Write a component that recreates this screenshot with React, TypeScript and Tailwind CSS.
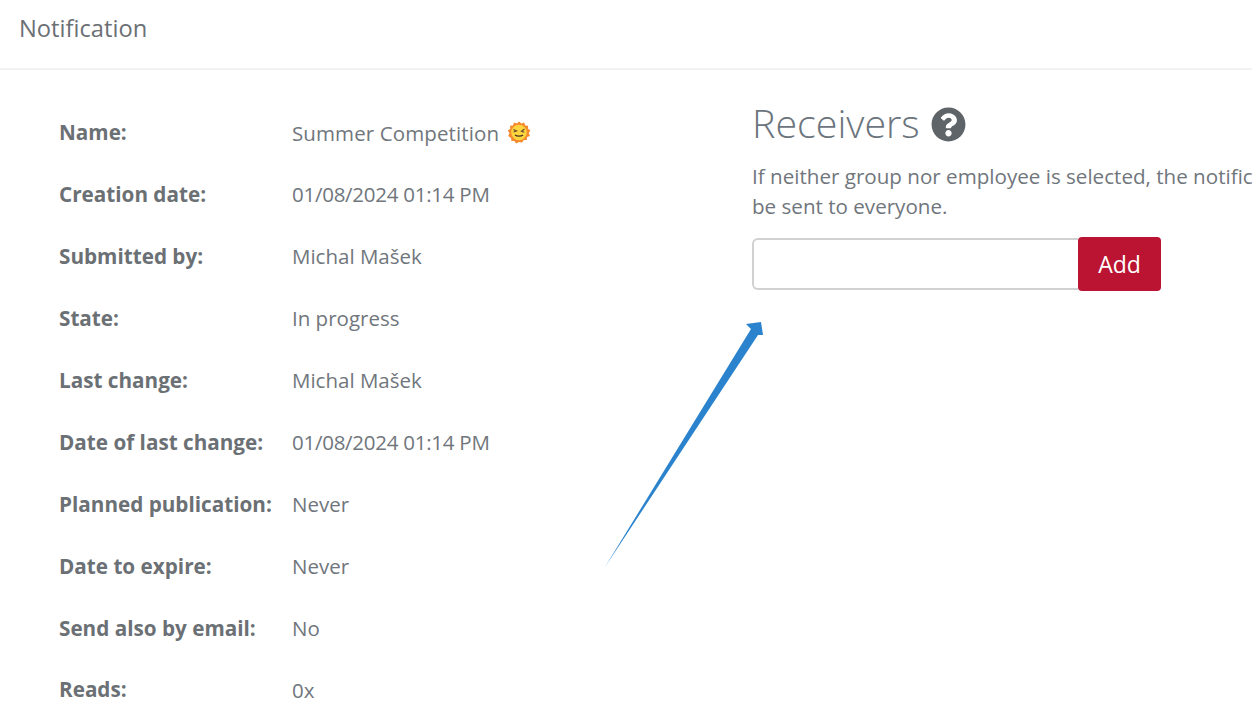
import { FaQuestionCircle } from "react-icons/fa";

const rows = [
  { label: "Name:", value: "Summer Competition", emoji: true, spacing: "tracking-[0.11px]" },
  { label: "Creation date:", value: "01/08/2024 01:14 PM", spacing: "tracking-[-0.26px]" },
  { label: "Submitted by:", value: "Michal Mašek" },
  { label: "State:", value: "In progress" },
  { label: "Last change:", value: "Michal Mašek" },
  { label: "Date of last change:", value: "01/08/2024 01:14 PM", spacing: "tracking-[-0.26px]" },
  { label: "Planned publication:", value: "Never" },
  { label: "Date to expire:", value: "Never" },
  { label: "Send also by email:", value: "No" },
  { label: "Reads:", value: "0x" },
];

function SunEmoji() {
  return (
    <svg width="24" height="24" viewBox="0 0 24 24" className="ml-2 shrink-0">
      <path
        d="M12 .5l2.300 2 2.900-1 1 2.900 3 .4-.3 3 2.600 1.800-1.800 2.500 1.300 2.800-2.900 1.200-.3 3-3-.2-1.800 2.500L12 21l-2.800 1.400-1.800-2.500-3 .2-.3-3L1.200 14.900l1.300-2.800L.7 9.600l2.600-1.800-.3-3 3-.4 1-2.900 2.900 1z"
        fill="#f58a2c"
      />
      <circle cx="12" cy="11.500" r="7.800" fill="#fcd53f" />
      <path d="M6.500 8.500l3 1.500-3 1" stroke="#6b4a2a" strokeWidth="1.200" fill="none" />
      <path d="M17.500 8l-3 2.200 2.800 1" stroke="#6b4a2a" strokeWidth="1.200" fill="none" />
      <path d="M8 14c2 1.500 6 1.500 8 0" stroke="#4a3320" strokeWidth="1.400" fill="none" />
    </svg>
  );
}

export default function App() {
  return (
    <div className="relative h-[712px] w-[1252px] overflow-hidden bg-white font-['Open_Sans',sans-serif] text-[#70767c]">
      <header className="flex h-[70px] items-center border-b-2 border-[#f2f2f2] pb-[11px] pl-[19px]">
        <h1 className="text-[23.700px] text-[#6b7075]">Notification</h1>
      </header>

      <main className="flex">
        <section className="w-[752px] shrink-0 pl-[59px] pt-[32px]">
          {rows.map((row) => (
            <div key={row.label} className="flex h-[61.900px] items-center text-[20.500px]">
              <span className="w-[233px] shrink-0 whitespace-nowrap text-[20.700px] font-bold text-[#6b7075]">
                {row.label}
              </span>
              <span className={`flex items-center whitespace-nowrap ${row.spacing ?? ""}`}>
                {row.value}
                {row.emoji && <SunEmoji />}
              </span>
            </div>
          ))}
        </section>

        <section className="w-[615px] shrink-0 pt-[24px]">
          <h2 className="flex h-[60px] items-center text-[39.400px] font-light text-[#6c757d]">
            Receivers
            <FaQuestionCircle className="ml-[11px] text-[35px] text-[#5f6468]" />
          </h2>
          <p className="mt-[6.500px] text-[20.600px] leading-[30px]">
            If neither group nor employee is selected, the notification will be sent to everyone.
          </p>
          <div className="mt-[16.500px] flex h-[54px] w-[409px] items-center">
            <input className="h-[52px] min-w-0 flex-1 rounded-l-[6px] border-2 border-r-0 border-[#cfd1d3] bg-white" />
            <button className="h-[54px] w-[83px] rounded-[4px] bg-[#ba1432] text-[23px] text-white">Add</button>
          </div>
        </section>
      </main>

      <svg width="180" height="260" viewBox="0 0 180 260" className="pointer-events-none absolute left-[595px] top-[315px]">
        <path d="M10 252L156 14L151 9L166 7L168 20L163 20Z" fill="#2b83cd" />
      </svg>
    </div>
  );
}
